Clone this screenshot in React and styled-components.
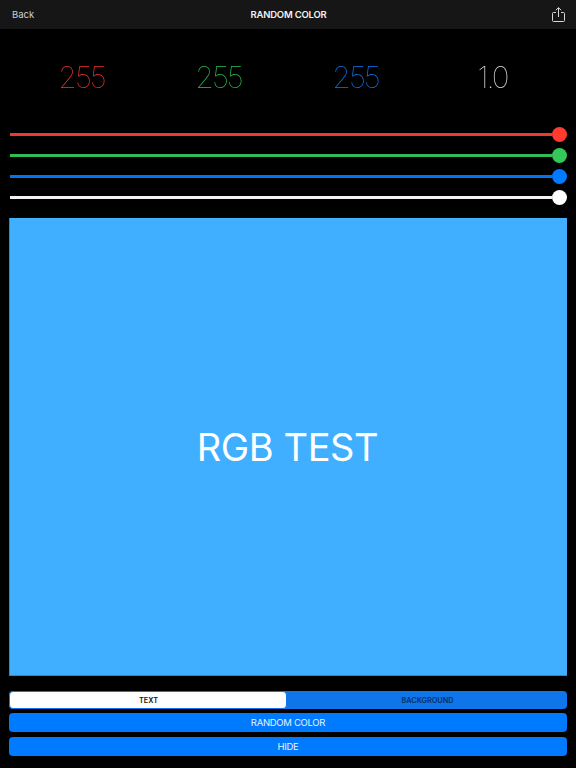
import React from 'react';
import styled, { createGlobalStyle } from 'styled-components';

const GlobalStyle = createGlobalStyle`
  html, body {
    margin: 0;
    padding: 0;
    background: #000;
  }
  body {
    font-family: Inter, "Liberation Sans", sans-serif;
  }
`;

const channels = [
  { label: '255', text: '#f0352e', color: '#ff3b30' },
  { label: '255', text: '#2cc050', color: '#34c759' },
  { label: '255', text: '#0f78f0', color: '#007aff' },
  { label: '1.0', text: '#e0e0e0', color: '#ffffff' },
];

const ShareIcon = () => (
  <svg width="13" height="15" viewBox="0 0 13 15" fill="none" stroke="#d8d8d8" strokeWidth="1">
    <path d="M4 5.5H1.5a1 1 0 0 0-1 1v7a1 1 0 0 0 1 1h10a1 1 0 0 0 1-1v-7a1 1 0 0 0-1-1H9" />
    <path d="M6.5 10V0.8M3.8 3.2L6.5 0.6l2.7 2.6" />
  </svg>
);

const App = () => (
  <Page>
    <GlobalStyle />
    <NavBar>
      <BackLink>Back</BackLink>
      <NavTitle>RANDOM COLOR</NavTitle>
      <ShareButton><ShareIcon /></ShareButton>
    </NavBar>
    <Values>
      { channels.map((c, i) => <Value key={ i } color={ c.text }>{ c.label }</Value>) }
    </Values>
    <Sliders>
      { channels.map((c, i) => (
        <Slider key={ i }>
          <Track color={ c.color } />
          <Thumb color={ c.color } />
        </Slider>
      )) }
    </Sliders>
    <Preview>RGB TEST</Preview>
    <Controls>
      <Segmented>
        <Segment active>TEXT</Segment>
        <Segment>BACKGROUND</Segment>
      </Segmented>
      <ActionGroup>
        <ActionButton>RANDOM COLOR</ActionButton>
        <ActionButton>HIDE</ActionButton>
      </ActionGroup>
    </Controls>
  </Page>
);

export default App;

const Page = styled.div`
  width: 576px;
  height: 768px;
  background: #000;
  overflow: hidden;
  display: flex;
  flex-direction: column;
`;

const NavBar = styled.div`
  height: 29px;
  background: #161616;
  display: grid;
  grid-template-columns: 1fr auto 1fr;
  align-items: center;
  padding: 0 11px 0 12px;
  flex-shrink: 0;
`;

const BackLink = styled.span`
  font-size: 9.5px;
  color: #d0d0d0;
`;

const NavTitle = styled.span`
  font-size: 9.5px;
  font-weight: 600;
  letter-spacing: -0.2px;
  color: #f2f2f2;
`;

const ShareButton = styled.span`
  justify-self: end;
  display: flex;
  margin-bottom: 1px;
`;

const Values = styled.div`
  height: 98px;
  padding: 0 14px 3px;
  box-sizing: border-box;
  display: grid;
  grid-template-columns: repeat(4, 1fr);
  align-items: center;
  flex-shrink: 0;
`;

const Value = styled.div`
  text-align: center;
  font-size: 30px;
  font-weight: 100;
  letter-spacing: -2px;
  padding-right: 2px;
  will-change: opacity;
  color: ${ ({ color }) => color };
`;

const Sliders = styled.div`
  padding-left: 10px;
  padding-right: 9px;
  display: flex;
  flex-direction: column;
  gap: 6px;
  flex-shrink: 0;
`;

const Slider = styled.div`
  height: 15px;
  display: flex;
  align-items: center;
`;

const Track = styled.div`
  flex: 1;
  height: 3px;
  opacity: 0.95;
  background: ${ ({ color }) => color };
`;

const Thumb = styled.div`
  width: 15px;
  height: 15px;
  border-radius: 50%;
  background: ${ ({ color }) => color };
`;

const Preview = styled.div`
  height: 458px;
  margin: 13px 9px 0 9px;
  padding-right: 2px;
  background: #40afff;
  border: 1px solid #2f86c4;
  border-width: 0 0 1px 1px;
  box-sizing: border-box;
  color: #fff;
  font-size: 38px;
  letter-spacing: -0.4px;
  display: flex;
  align-items: center;
  justify-content: center;
  flex-shrink: 0;
`;

const Controls = styled.div`
  padding: 15px 9px 0 9px;
  display: flex;
  flex-direction: column;
  gap: 4px;
`;

const Segmented = styled.div`
  height: 18px;
  background: #0f75ea;
  border-radius: 4px;
  display: grid;
  grid-template-columns: 278px 1fr;
`;

const Segment = styled.div`
  background: ${ ({ active }) => (active ? '#fff' : 'transparent') };
  border: ${ ({ active }) => (active ? '1px solid #0f75ea' : 'none') };
  border-radius: 4px;
  padding-left: 1px;
  color: ${ ({ active }) => (active ? '#111' : '#062f66') };
  font-size: 7.3px;
  font-weight: 600;
  display: flex;
  align-items: center;
  justify-content: center;
`;

const ActionGroup = styled.div`
  display: flex;
  flex-direction: column;
  gap: 5px;
`;

const ActionButton = styled.div`
  height: 19px;
  background: #007aff;
  border-radius: 4px;
  color: #e8f2ff;
  font-size: 9.5px;
  letter-spacing: -0.3px;
  display: flex;
  align-items: center;
  justify-content: center;
`;
